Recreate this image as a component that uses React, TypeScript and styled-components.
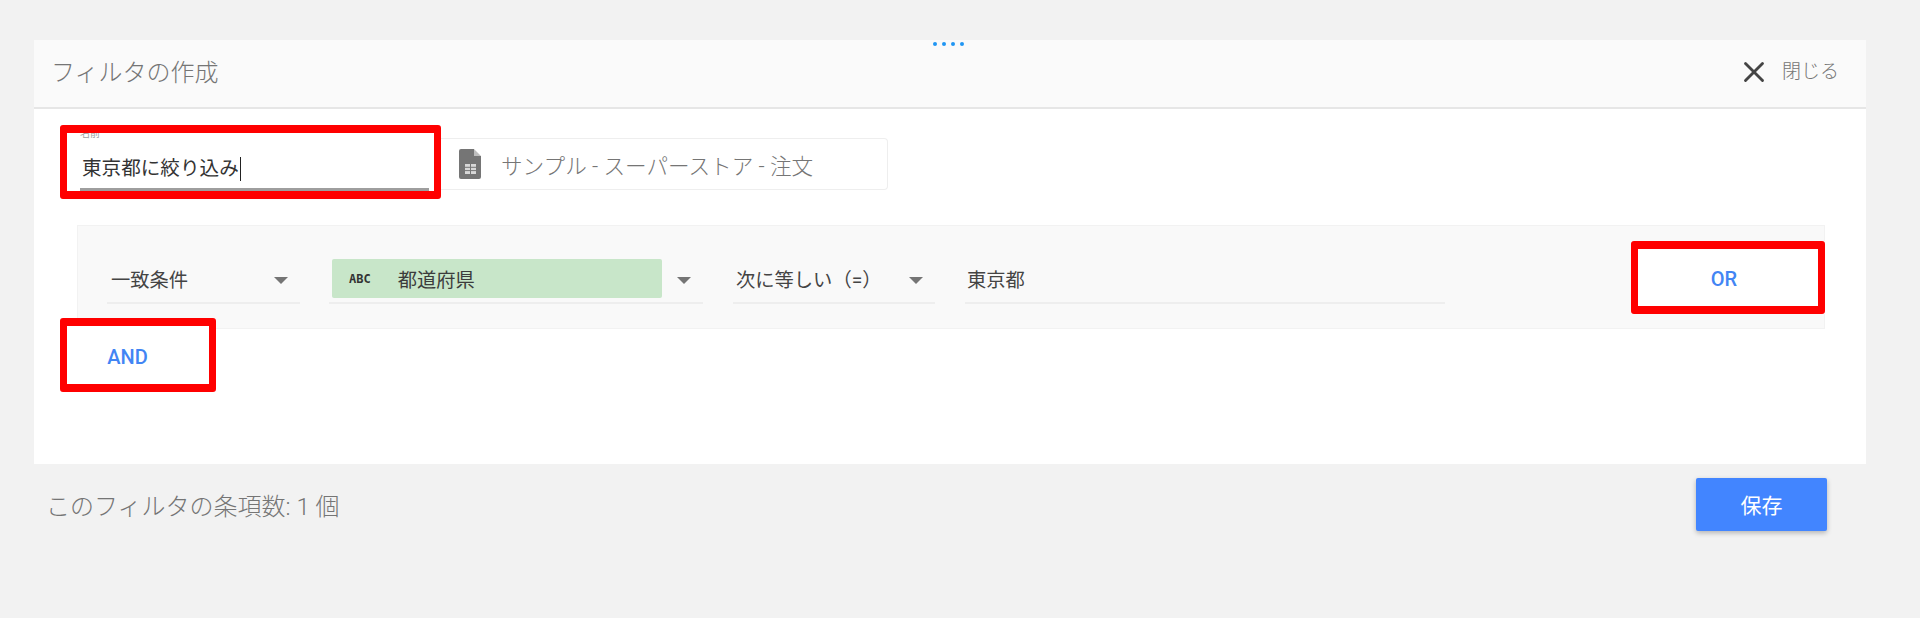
import React from 'react';
import styled, { createGlobalStyle } from 'styled-components';
import { X } from 'lucide-react';

const GlobalStyle = createGlobalStyle`
    html, body {
        margin: 0;
        height: 100%;
        background: #f2f2f2;
    }
    body {
        font-family: Roboto, "Noto Sans CJK JP", sans-serif;
        overflow: hidden;
    }
`;

const Page = styled.div`
    width: 1920px;
    height: 618px;
    padding: 40px 54px 0 34px;
    box-sizing: border-box;
    position: relative;
`;

const DragDots = styled.div`
    position: absolute;
    top: 42px;
    left: 933px;
    display: flex;
    gap: 5px;
`;

const Dot = styled.span`
    width: 4px;
    height: 4px;
    border-radius: 50%;
    background: #2196f3;
`;

const Panel = styled.div`
    background: #fff;
    height: 424px;
`;

const Header = styled.header`
    height: 69px;
    box-sizing: border-box;
    padding: 0 27px 6px 17px;
    background: #fafafa;
    border-bottom: 2px solid #e6e6e6;
    display: flex;
    align-items: center;
    justify-content: space-between;
`;

const Title = styled.h1`
    margin: 0;
    font-size: 24px;
    font-weight: 300;
    color: #757575;
`;

const CloseButton = styled.div`
    display: flex;
    align-items: center;
    gap: 11px;
    margin-bottom: 2px;
    font-size: 19px;
    font-weight: 300;
    color: #757575;
`;

const CloseIcon = styled(X)`
    margin-top: 4px;
`;

const Content = styled.div`
    padding: 16px 0 0 26px;
`;

const NameRow = styled.div`
    display: flex;
    align-items: center;
`;

const NameField = styled.div`
    position: relative;
    width: 381px;
    height: 74px;
    box-sizing: border-box;
    padding: 0 12px 0 20px;
    background: #fff;
`;

const FieldLabel = styled.div`
    height: 27px;
    font-size: 10px;
    line-height: 17px;
    color: #9e9e9e;
`;

const FieldValue = styled.div`
    height: 39px;
    box-sizing: border-box;
    padding: 0 0 3px 2px;
    display: flex;
    align-items: center;
    font-size: 19.6px;
    line-height: 30px;
    color: #333;
    border-bottom: 3px solid #9e9e9e;
`;

const Caret = styled.span`
    width: 1px;
    height: 24px;
    margin-left: 1px;
    background: #222;
`;

const SourceBox = styled.div`
    width: 447px;
    height: 52px;
    margin-top: 4px;
    box-sizing: border-box;
    padding-left: 18px;
    display: flex;
    align-items: center;
    gap: 20px;
    background: #fff;
    border: 1px solid #eeeeee;
    border-left: none;
    border-radius: 0 4px 4px 0;
    font-size: 21.6px;
    font-weight: 300;
    color: #757575;
`;

const FilterRow = styled.div`
    margin: 26px 0 0 17px;
    width: 1748px;
    height: 104px;
    box-sizing: border-box;
    padding: 34px 0 0 29px;
    display: flex;
    align-items: flex-start;
    background: #f9f9f9;
    border: 1px solid #f2f2f2;
`;

const Control = styled.div<{ $width: number; $gap: number; $inset: number }>`
    width: ${({ $width }) => $width}px;
    margin-right: ${({ $gap }) => $gap}px;
    height: 44px;
    box-sizing: border-box;
    padding: 0 12px 5px ${({ $inset }) => $inset}px;
    display: flex;
    align-items: center;
    justify-content: space-between;
    border-bottom: 2px solid #eeeeee;
    font-size: 19.3px;
    color: #444;
`;

const Arrow = styled.span`
    width: 0;
    height: 0;
    margin-top: 3px;
    border-left: 7px solid transparent;
    border-right: 7px solid transparent;
    border-top: 7px solid #757575;
`;

const FieldChip = styled.div`
    width: 330px;
    height: 39px;
    box-sizing: border-box;
    padding-left: 17px;
    display: flex;
    align-items: center;
    gap: 27px;
    background: #c8e6c9;
    border-radius: 2px;
    color: #3c3c3c;
`;

const TypeTag = styled.span`
    font-family: "DejaVu Sans Mono", monospace;
    font-size: 12px;
    font-weight: 700;
    color: #333;
`;

const TextButton = styled.button`
    position: relative;
    border: 0;
    background: #fff;
    font-family: inherit;
    font-size: 20px;
    font-weight: 500;
    color: #4285f4;
`;

const OrButton = styled(TextButton)`
    width: 194px;
    height: 73px;
    padding: 2px 8px 0 0;
    margin: -19px -1px 0 auto;
`;

const AndButton = styled(TextButton)`
    display: block;
    width: 156px;
    height: 74px;
    padding: 4px 21px 0 0;
    margin: -11px 0 0 0;
`;

/* red annotation drawn on top of the screenshot */
const Highlight = styled.span`
    position: absolute;
    inset: 0;
    border: solid #ff0000;
    border-width: 8px 7px;
    border-radius: 3px;
    box-sizing: border-box;
`;

const Footer = styled.footer`
    height: 67px;
    padding: 14px 39px 0 12px;
    display: flex;
    justify-content: space-between;
    align-items: flex-start;
`;

const Count = styled.div`
    margin-top: 9px;
    font-size: 24px;
    font-weight: 300;
    color: #757575;
`;

const SaveButton = styled.button`
    width: 131px;
    height: 53px;
    padding: 0 0 2px;
    border: 0;
    border-radius: 2px;
    background: #4285ff;
    color: #fff;
    font-family: inherit;
    font-size: 21px;
    box-shadow: 0 2px 5px rgba(0, 0, 0, 0.26);
`;

const SheetIcon = () => (
    <svg width="22" height="30" viewBox="0 0 22 30">
        <path d="M2 0h13v7h7v21a2 2 0 0 1-2 2H2a2 2 0 0 1-2-2V2a2 2 0 0 1 2-2z" fill="#757575" />
        <path d="M15 0l7 7h-7z" fill="#bdbdbd" />
        <path d="M6 15h11v10H6z" fill="#d8d8d8" />
        <path d="M6 18.3h11M6 21.6h11M11.5 15v10" stroke="#757575" strokeWidth="1" />
    </svg>
);

export default function App() {
    return (
        <Page>
            <GlobalStyle />
            <DragDots>
                <Dot />
                <Dot />
                <Dot />
                <Dot />
            </DragDots>
            <Panel>
                <Header>
                    <Title>フィルタの作成</Title>
                    <CloseButton>
                        <CloseIcon size={34} color="#444" strokeWidth={2} />
                        閉じる
                    </CloseButton>
                </Header>
                <Content>
                    <NameRow>
                        <NameField>
                            <FieldLabel>名前</FieldLabel>
                            <FieldValue>
                                東京都に絞り込み
                                <Caret />
                            </FieldValue>
                            <Highlight />
                        </NameField>
                        <SourceBox>
                            <SheetIcon />
                            サンプル - スーパーストア - 注文
                        </SourceBox>
                    </NameRow>
                    <FilterRow>
                        <Control $width={193} $gap={29} $inset={4}>
                            一致条件
                            <Arrow />
                        </Control>
                        <Control $width={374} $gap={30} $inset={3}>
                            <FieldChip>
                                <TypeTag>ABC</TypeTag>
                                都道府県
                            </FieldChip>
                            <Arrow />
                        </Control>
                        <Control $width={202} $gap={30} $inset={3}>
                            次に等しい（=）
                            <Arrow />
                        </Control>
                        <Control $width={480} $gap={0} $inset={2}>
                            東京都
                        </Control>
                        <OrButton>
                            OR
                            <Highlight />
                        </OrButton>
                    </FilterRow>
                    <AndButton>
                        AND
                        <Highlight />
                    </AndButton>
                </Content>
            </Panel>
            <Footer>
                <Count>このフィルタの条項数: 1 個</Count>
                <SaveButton>保存</SaveButton>
            </Footer>
        </Page>
    );
}
